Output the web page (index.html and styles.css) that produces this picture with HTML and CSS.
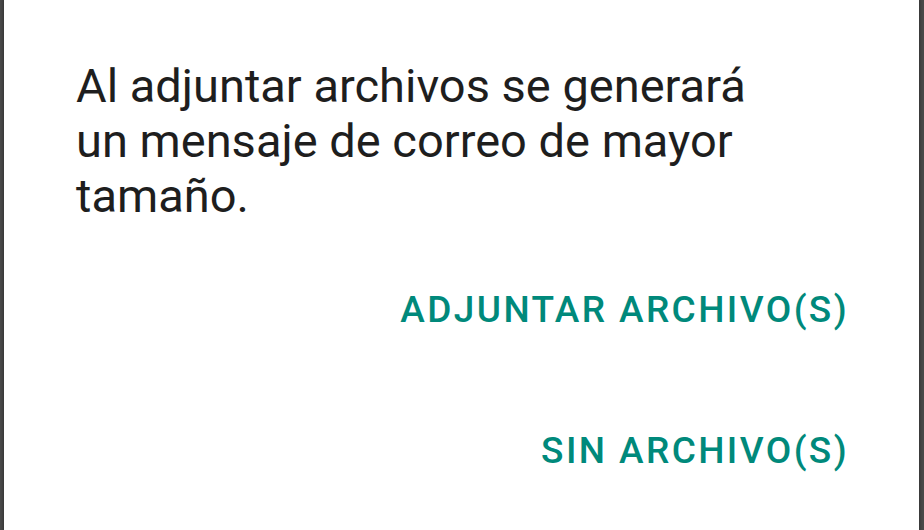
FILE: index.html
```html
<!DOCTYPE html>
<html lang="es">
	<head>
		<meta charset="UTF-8" />
		<meta name="viewport" content="width=device-width, initial-scale=1.0" />
		<title>Adjuntar archivos</title>
		<link rel="stylesheet" href="styles.css">
	</head>
	<body>
		<div class="dialog">
			<p class="message">
				Al adjuntar archivos se generará<br />
				un mensaje de correo de mayor<br />
				tamaño.
			</p>
			<div class="actions">
				<button class="action">ADJUNTAR ARCHIVO(S)</button>
				<button class="action">SIN ARCHIVO(S)</button>
			</div>
		</div>
	</body>
</html>
```

FILE: styles.css
```css
html,
body {
	height: 100%;
}

body {
	margin: 0;
	background: #4a4a4a;
	font-family: "Roboto", "Noto Sans", sans-serif;
	overflow: hidden;
}

.dialog {
	box-sizing: border-box;
	height: 100%;
	margin: 0 5px 0 4px;
	padding: 58px 72px 0 72px;
	background: #fff;
	box-shadow: 0 0 3px 1px rgba(0, 0, 0, 0.35);
	display: flex;
	flex-direction: column;
}

.message {
	margin: 0;
	color: #1e1e1e;
	font-size: 47px;
	line-height: 55px;
}

.actions {
	display: flex;
	flex-direction: column;
	align-items: flex-end;
	gap: 97px;
	margin-top: 65px;
}

.action {
	background: none;
	border: none;
	padding: 0;
	margin-right: -2px;
	color: #00897b;
	font-family: inherit;
	font-size: 37px;
	font-weight: 500;
	letter-spacing: 2.4px;
	line-height: 44px;
	cursor: pointer;
}
```
